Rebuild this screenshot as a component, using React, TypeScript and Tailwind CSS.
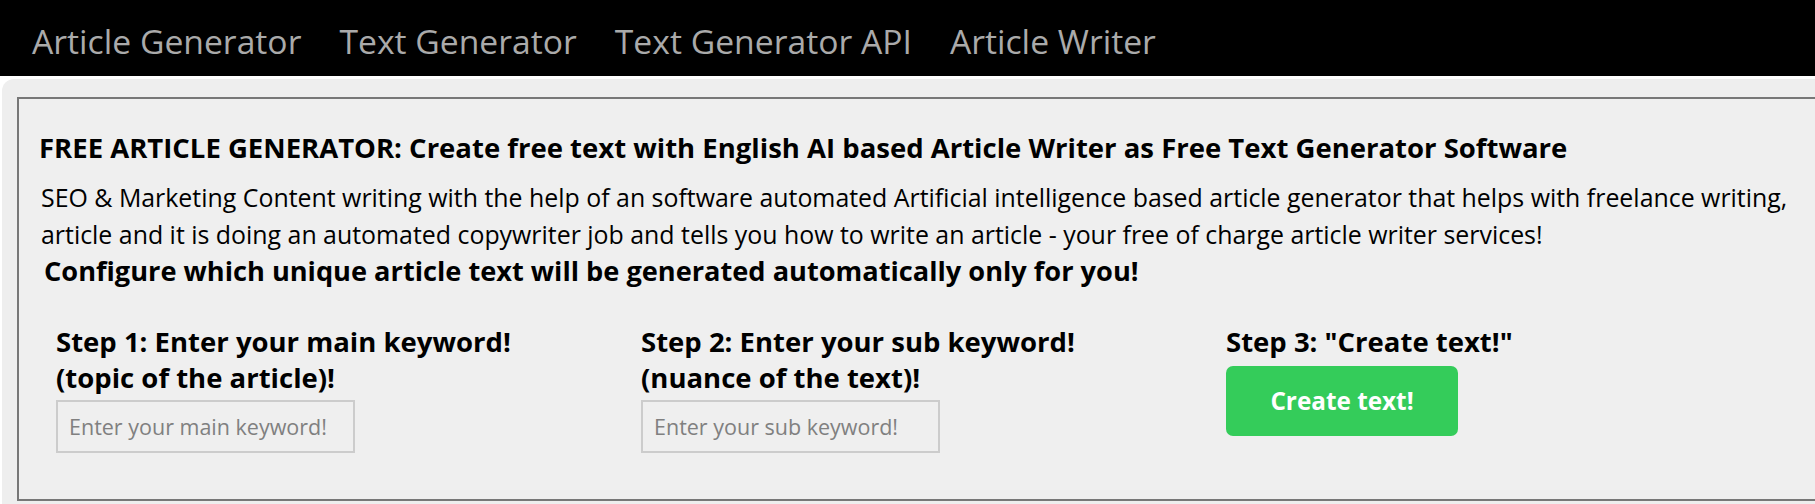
export default function App() {
  const font = { fontFamily: '"Open Sans", "Noto Sans", Arial, sans-serif' };
  return (
    <div className="w-[1815px] h-[504px] overflow-hidden bg-white text-black" style={font}>
      <nav className="h-[76px] bg-black flex items-center pl-[13px]">
        {["Article Generator", "Text Generator", "Text Generator API", "Article Writer"].map((item) => (
          <a key={item} href="#" className="px-[19px] pt-[7px] text-[33.7px] leading-none text-[#aaaaaa]">
            {item}
          </a>
        ))}
      </nav>
      <div className="mt-[3px] ml-[2px] bg-[#eeeeee] rounded-tl-[12px] pt-[18px] pl-[15px] h-[440px]">
        <div className="border-2 border-r-0 border-[#777777] bg-[#efefef] pl-[24px] pt-[32px] pb-[46px]">
          <h1 className="-ml-[4px] text-[27.5px] font-bold leading-[34px]">
            FREE ARTICLE GENERATOR: Create free text with English AI based Article Writer as Free Text Generator Software
          </h1>
          <p className="mt-[14px] -ml-[2px] text-[24.9px] leading-[37px]">
            SEO &amp; Marketing Content writing with the help of an software automated Artificial intelligence based article generator that helps with freelance writing,
            <br />
            article and it is doing an automated copywriter job and tells you how to write an article - your free of charge article writer services!
          </p>
          <h2 className="ml-[1px] text-[27.2px] font-bold leading-[36px]">
            Configure which unique article text will be generated automatically only for you!
          </h2>
          <div className="mt-[35px] ml-[13px] grid grid-cols-[585px_585px_585px]">
            <div>
              <h3 className="text-[27.5px] font-bold leading-[36px]">
                Step 1: Enter your main keyword!
                <br />
                (topic of the article)!
              </h3>
              <input
                type="text"
                placeholder="Enter your main keyword!"
                className="mt-[4px] w-[299px] h-[53px] border-2 border-[#cccccc] bg-transparent px-[11px] text-[21.5px] placeholder:text-[#808080] outline-none"
              />
            </div>
            <div>
              <h3 className="text-[27.5px] font-bold leading-[36px]">
                Step 2: Enter your sub keyword!
                <br />
                (nuance of the text)!
              </h3>
              <input
                type="text"
                placeholder="Enter your sub keyword!"
                className="mt-[4px] w-[299px] h-[53px] border-2 border-[#cccccc] bg-transparent px-[11px] text-[21.5px] placeholder:text-[#808080] outline-none"
              />
            </div>
            <div>
              <h3 className="text-[27.5px] font-bold leading-[36px]">Step 3: &quot;Create text!&quot;</h3>
              <button className="mt-[6px] w-[232px] h-[70px] rounded-[7px] bg-[#34cc5a] text-white text-[24.3px] font-bold">
                Create text!
              </button>
            </div>
          </div>
        </div>
      </div>
    </div>
  );
}
